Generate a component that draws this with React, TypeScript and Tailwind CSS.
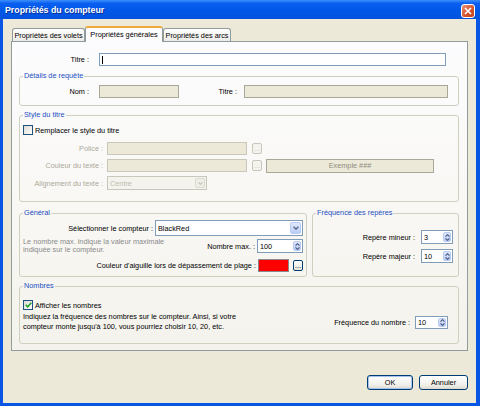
import React from "react";

const FONT = "font-['Liberation_Sans',Arial,sans-serif]";

function Arrow({ dir, color = "#4d6185" }: { dir: "up" | "down"; color?: string }) {
  return (
    <svg width="5" height="3" viewBox="0 0 5 3">
      <path
        d={dir === "up" ? "M0.5 2.7 L2.5 0.6 L4.5 2.7" : "M0.5 0.3 L2.5 2.4 L4.5 0.3"}
        fill="none"
        stroke={color}
        strokeWidth="1.1"
      />
    </svg>
  );
}

function Spin({ value, className }: { value: string; className: string }) {
  return (
    <div className={`flex bg-white border border-[#7f9db9] ${className}`}>
      <div className="flex-1 pl-[2px] flex items-center text-black">{value}</div>
      <div className="w-[8px] my-[1px] mr-[1px] flex flex-col items-center justify-center gap-[1px] rounded-[2px] border border-[#b9cbf4] bg-[linear-gradient(to_bottom,#dfe8fd,#bccdf6)]">
        <Arrow dir="up" />
        <Arrow dir="down" />
      </div>
    </div>
  );
}

function Check({ checked }: { checked?: boolean }) {
  return (
    <div className="w-[10px] h-[10px] border border-[#1c5180] bg-[linear-gradient(135deg,#dcdad2,#ffffff)] flex items-center justify-center mr-[1px]">
      {checked && (
        <svg width="7" height="6" viewBox="0 0 7 6">
          <path d="M0.7 2.8 L2.6 4.8 L6.3 0.8" fill="none" stroke="#21a121" strokeWidth="1.5" />
        </svg>
      )}
    </div>
  );
}

function Dots({ disabled }: { disabled?: boolean }) {
  return (
    <div
      className={`w-[10px] h-[11px] rounded-[2px] border flex items-end justify-center pb-[1px] leading-[6px] ${
        disabled
          ? "border-[#c9c7ba] bg-[#f4f3ee] text-[#c9c7ba]"
          : "border-[#003c74] bg-[linear-gradient(to_bottom,#ffffff,#e6e3da)] text-black"
      }`}
    >
      ...
    </div>
  );
}

function Tab({ label, selected, className }: { label: string; selected?: boolean; className: string }) {
  if (selected) {
    return (
      <div
        className={`relative z-10 h-[16px] border border-b-0 border-[#919b9c] border-t-[2px] border-t-[#f2a93b] rounded-t-[3px] bg-[#fcfcfe] flex items-center justify-center pb-[1px] ${className}`}
      >
        {label}
      </div>
    );
  }
  return (
    <div
      className={`h-[13px] mb-[1px] border border-b-0 border-[#919b9c] rounded-t-[3px] bg-[linear-gradient(to_bottom,#ffffff,#ecebe6)] flex items-center justify-center ${className}`}
    >
      {label}
    </div>
  );
}

function Legend({ children }: { children: React.ReactNode }) {
  return <legend className="px-[1px] h-[10px] leading-[10px] text-[#1c4fbf]">{children}</legend>;
}

export default function App() {
  return (
    <div
      className={`w-[480px] h-[406px] bg-[#0856e3] flex flex-col ${FONT} text-[7.3px] leading-[9px] text-black overflow-hidden`}
    >
      {/* title bar */}
      <div className="h-[19px] flex items-center justify-between pl-[5px] pr-[5px] pt-[2px] bg-[linear-gradient(to_bottom,#3d8ffb,#0a5ff0_18%,#0057e7_60%,#0352dd)]">
        <span className="text-white font-bold text-[8.8px] [text-shadow:1px_1px_0_#0b2f9b]">
          Propriétés du compteur
        </span>
        <div className="w-[14px] h-[14px] rounded-[3px] border border-white bg-[linear-gradient(135deg,#ea9479,#d3552f_55%,#c1411c)] flex items-center justify-center">
          <svg width="8" height="8" viewBox="0 0 8 8">
            <path d="M1 1 L7 7 M7 1 L1 7" stroke="white" strokeWidth="1.6" />
          </svg>
        </div>
      </div>

      {/* body */}
      <div className="flex-1 ml-[3px] mr-[4px] mb-[3px] bg-[#ece9d8] flex flex-col pl-[8px] pr-[8px] pt-[7px]">
        {/* tabs */}
        <div className="flex items-end h-[16px] pl-[1px] -mb-px relative z-10">
          <Tab label="Propriétés des volets" className="w-[73px]" />
          <Tab label="Propriétés générales" selected className="w-[78px]" />
          <Tab label="Propriétés des arcs" className="w-[68px]" />
        </div>

        {/* panel */}
        <div className="h-[310px] border border-[#919b9c] bg-[linear-gradient(to_bottom,#fcfcfe,#f8f7f3_60%,#f3f2ec)] pt-[11px] pl-[7px] pr-[8px] flex flex-col">
          {/* Titre */}
          <div className="flex items-center h-[13px]">
            <div className="w-[70px] text-right mr-[10px]">Titre :</div>
            <div className="w-[347px] h-[13px] bg-white border border-[#7f9db9] flex items-center pl-[2px]">
              <div className="w-px h-[8px] bg-black" />
            </div>
          </div>

          {/* Détails de requête */}
          <fieldset className="mt-[5px] min-w-0 border border-[#d0d0bf] rounded-[3px] pl-[3px] pt-[4px] pb-[7px]">
            <Legend>Détails de requête</Legend>
            <div className="flex items-center h-[13px]">
              <div className="w-[66px] text-right mr-[10px]">Nom :</div>
              <div className="w-[80px] h-[13px] bg-[#ece9d8] border border-[#a9a798]" />
              <div className="w-[58px] text-right mr-[7px]">Titre :</div>
              <div className="w-[204px] h-[13px] bg-[#ece9d8] border border-[#a9a798]" />
            </div>
          </fieldset>

          {/* Style du titre */}
          <fieldset className="mt-[4px] min-w-0 border border-[#d0d0bf] rounded-[3px] pl-[3px] pt-[5px] pb-[11px]">
            <Legend>Style du titre</Legend>
            <div className="flex items-center h-[10px]">
              <Check />
              <span className="ml-[1px]">Remplacer le style du titre</span>
            </div>
            <div className="flex items-center h-[13px] mt-[7px] text-[#aca899]">
              <div className="w-[80px] text-right mr-[4px]">Police :</div>
              <div className="w-[140px] h-[13px] bg-[#ece9d8] border border-[#c9c7ba]" />
              <div className="ml-[5px]">
                <Dots disabled />
              </div>
            </div>
            <div className="flex items-center h-[13px] mt-[4px] text-[#aca899]">
              <div className="w-[80px] text-right mr-[4px]">Couleur du texte :</div>
              <div className="w-[140px] h-[13px] bg-[#ece9d8] border border-[#c9c7ba]" />
              <div className="ml-[5px]">
                <Dots disabled />
              </div>
              <div className="ml-[4px] w-[168px] h-[14px] bg-[#ece9d8] border border-[#a9a798] flex items-center justify-center text-[#8f8d80]">
                Exemple ###
              </div>
            </div>
            <div className="flex items-center h-[14px] mt-[4px] text-[#aca899]">
              <div className="w-[80px] text-right mr-[4px]">Alignement du texte :</div>
              <div className="w-[100px] h-[14px] bg-[#f4f3ee] border border-[#c9c7ba] flex">
                <div className="flex-1 pl-[2px] flex items-center text-[#c0bdb0]">Centre</div>
                <div className="w-[10px] my-[1px] mr-[1px] rounded-[2px] bg-[#eeede6] border border-[#dcdad0] flex items-center justify-center">
                  <Arrow dir="down" color="#c9c7ba" />
                </div>
              </div>
            </div>
          </fieldset>

          {/* Général + Fréquence des repères */}
          <div className="flex gap-[5px] mt-[6px]">
            <fieldset className="w-[288px] min-w-0 border border-[#d0d0bf] rounded-[3px] pl-[3px] pr-[3px] pt-[2px] pb-[4px]">
              <Legend>Général</Legend>
              <div className="flex items-center h-[16px]">
                <div className="w-[130px] text-right mr-[2px]">Sélectionner le compteur :</div>
                <div className="w-[148px] h-[16px] bg-white border border-[#7f9db9] flex">
                  <div className="flex-1 pl-[2px] flex items-center">BlackRed</div>
                  <div className="w-[11px] my-[1px] mr-[1px] rounded-[2px] border border-[#b9cbf4] bg-[linear-gradient(to_bottom,#dfe8fd,#bccdf6)] flex items-center justify-center">
                    <svg width="6" height="4" viewBox="0 0 6 4">
                      <path d="M0.6 0.6 L3 3.2 L5.4 0.6" fill="none" stroke="#4d6185" strokeWidth="1.3" />
                    </svg>
                  </div>
                </div>
              </div>
              <div className="flex items-center h-[16px] mt-[2px]">
                <div className="flex-1 leading-[8px] text-[#8a8a8a]">
                  Le nombre max. indique la valeur maximale
                  <br />
                  indiquée sur le compteur.
                </div>
                <div className="mr-[2px]">Nombre max. :</div>
                <Spin value="100" className="w-[46px] h-[14px]" />
              </div>
              <div className="flex items-center justify-end h-[13px] mt-[5px]">
                <div className="mr-[2px]">Couleur d'aiguille lors de dépassement de plage :</div>
                <div className="w-[31px] h-[13px] bg-[#ff0000] border border-[#8a8a8a]" />
                <div className="ml-[4px]">
                  <Dots />
                </div>
              </div>
            </fieldset>

            <fieldset className="w-[147px] min-w-0 border border-[#d0d0bf] rounded-[3px] pl-[3px] pr-[5px] pt-[12px] pb-[4px]">
              <Legend>Fréquence des repères</Legend>
              <div className="flex items-center justify-end h-[14px]">
                <div className="mr-[6px]">Repère mineur :</div>
                <Spin value="3" className="w-[32px] h-[14px]" />
              </div>
              <div className="flex items-center justify-end h-[14px] mt-[5px]">
                <div className="mr-[6px]">Repère majeur :</div>
                <Spin value="10" className="w-[32px] h-[14px]" />
              </div>
            </fieldset>
          </div>

          {/* Nombres */}
          <fieldset className="mt-[4px] min-w-0 border border-[#d0d0bf] rounded-[3px] pl-[3px] pr-[10px] pt-[9px] pb-[11px]">
            <Legend>Nombres</Legend>
            <div className="flex items-center h-[10px]">
              <Check checked />
              <span className="ml-[1px]">Afficher les nombres</span>
            </div>
            <div className="flex items-center mt-[2px]">
              <div className="flex-1 leading-[10px]">
                Indiquez la fréquence des nombres sur le compteur. Ainsi, si votre
                <br />
                compteur monte jusqu'à 100, vous pourriez choisir 10, 20, etc.
              </div>
              <div className="mr-[5px]">Fréquence du nombre :</div>
              <Spin value="10" className="w-[33px] h-[13px]" />
            </div>
          </fieldset>
        </div>

        {/* buttons */}
        <div className="flex justify-end gap-[6px] mt-[24px]">
          <button className="w-[46px] h-[15px] rounded-[3px] border border-[#003c74] bg-[linear-gradient(to_bottom,#ffffff,#f0efea_70%,#dcd8cc)] shadow-[inset_0_0_0_1px_#a9c2f0] flex items-center justify-center">
            OK
          </button>
          <button className="w-[49px] h-[15px] rounded-[3px] border border-[#003c74] bg-[linear-gradient(to_bottom,#ffffff,#f0efea_70%,#dcd8cc)] flex items-center justify-center">
            Annuler
          </button>
        </div>
      </div>
    </div>
  );
}
